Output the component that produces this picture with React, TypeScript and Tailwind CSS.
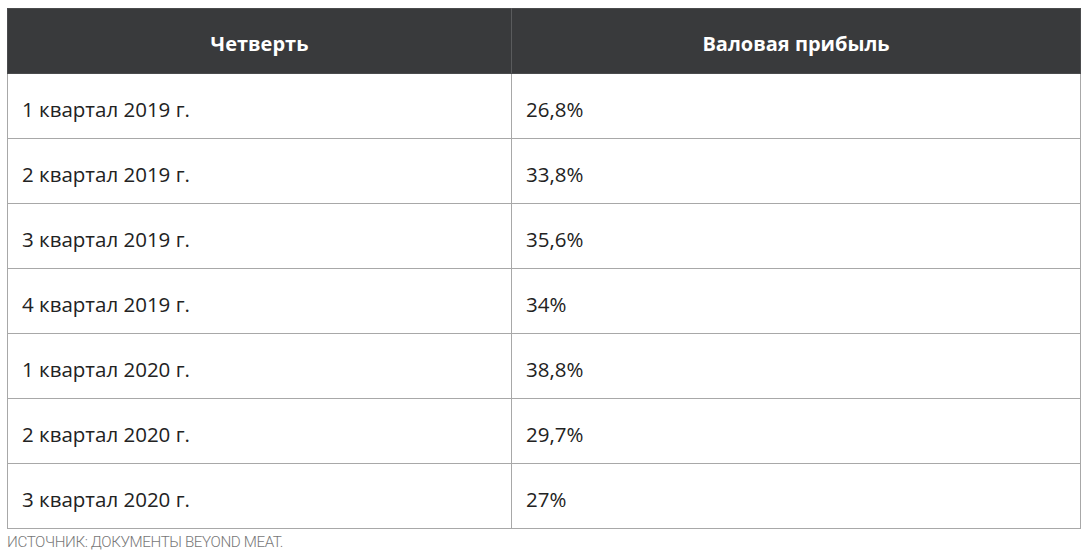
const rows: [string, string][] = [
  ["1 квартал 2019 г.", "26,8%"],
  ["2 квартал 2019 г.", "33,8%"],
  ["3 квартал 2019 г.", "35,6%"],
  ["4 квартал 2019 г.", "34%"],
  ["1 квартал 2020 г.", "38,8%"],
  ["2 квартал 2020 г.", "29,7%"],
  ["3 квартал 2020 г.", "27%"],
];

export default function App() {
  return (
    <div
      className="bg-white pt-2 pl-[7px] w-[1089px] h-[551px]"
      style={{ fontFamily: '"Open Sans", "Noto Sans", sans-serif' }}
    >
      <table className="w-[1074px] border-collapse table-fixed">
        <colgroup>
          <col className="w-[504px]" />
          <col />
        </colgroup>
        <thead>
          <tr className="bg-[#393a3c] h-[65px]">
            <th className="border border-[#4a4b4d] border-r-[#5a5b5d] pt-[5px] text-white font-bold text-[20px] text-center">
              Четверть
            </th>
            <th className="border border-[#4a4b4d] pt-[5px] text-white font-bold text-[20px] text-center">
              Валовая прибыль
            </th>
          </tr>
        </thead>
        <tbody>
          {rows.map(([quarter, profit], i) => (
            <tr key={i} className="h-[65px]">
              <td className="border border-[#a8a8a8] pl-[14px] pt-[6px] text-[20.5px] text-[#222]">
                {quarter}
              </td>
              <td className="border border-[#a8a8a8] pl-[14px] pt-[6px] text-[20.5px] text-[#222]">
                {profit}
              </td>
            </tr>
          ))}
        </tbody>
      </table>
      <div
        className="mt-[2px] text-[15.2px] font-light text-[#777] uppercase tracking-[-0.4px]"
        style={{ fontFamily: "Roboto, sans-serif" }}
      >
        Источник: документы Beyond Meat.
      </div>
    </div>
  );
}
